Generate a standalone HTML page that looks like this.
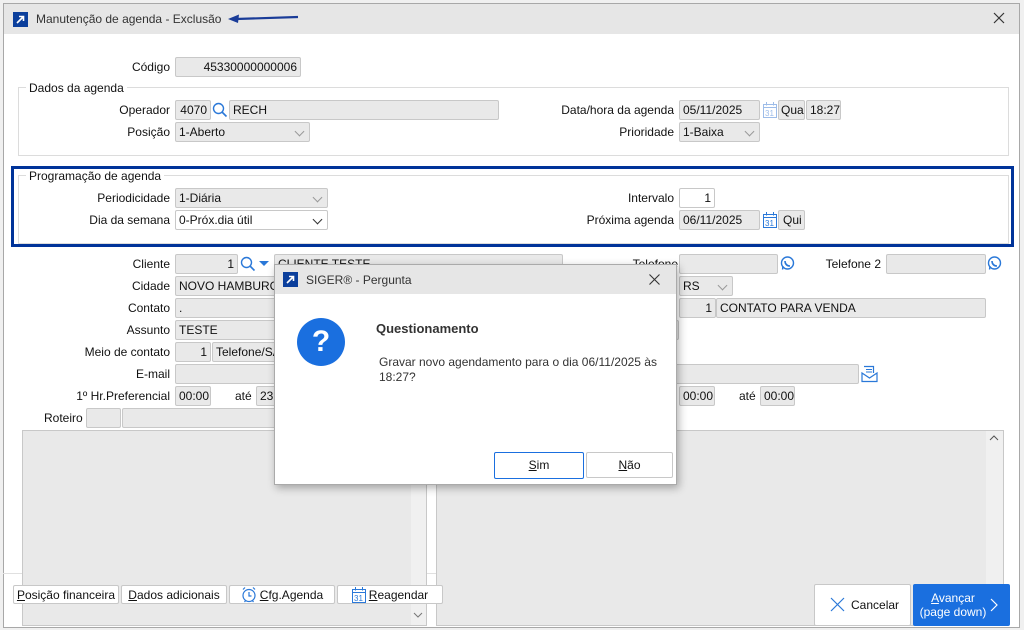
<!DOCTYPE html>
<html><head><meta charset="utf-8">
<style>
*{box-sizing:border-box;margin:0;padding:0}
body{width:1024px;height:630px;overflow:hidden;background:#f0f0f0;font-family:"Liberation Sans",sans-serif;font-size:12px;color:#111;position:relative}
.a{position:absolute}
.win{left:3px;top:3px;width:1017px;height:625px;background:#fff;border:1px solid #a8a8a8}
.tb{left:4px;top:4px;width:1015px;height:30px;background:#e6e6e6}
.lbl{position:absolute;text-align:right;white-space:nowrap;line-height:21px}
.f{position:absolute;height:20px;background:#e9e9e9;border:1px solid #c8c8c8;border-radius:2px;line-height:19px;padding:0 3px;white-space:nowrap;overflow:hidden}
.r{text-align:right}
.w{background:#fff}
.grp{position:absolute;border:1px solid #dcdcdc}
.leg{position:absolute;background:#fff;padding:0 3px;line-height:14px}
.chev{position:absolute;right:6px;top:5px;width:7px;height:7px;border-right:1px solid #999;border-bottom:1px solid #999;transform:rotate(45deg)}
.chev.d{border-color:#333}
.btn{position:absolute;height:19px;background:#fff;border:1px solid #c8c8c8;border-radius:2px;text-align:center;line-height:18px;white-space:nowrap}
u{text-decoration:underline}
</style></head><body>
<div class="a win"></div>
<div class="a tb"></div>
<svg class="a" style="left:13px;top:12px" width="15" height="15"><rect width="15" height="15" fill="#0b3f9c"/><path d="M4 11 L10.5 4.5 M6 4.5 H10.5 V9" stroke="#fff" stroke-width="1.6" fill="none"/></svg>
<div class="a" style="left:36px;top:12px;font-size:12px;color:#333">Manutenção de agenda - Exclusão</div>
<svg class="a" style="left:228px;top:12px" width="72" height="12"><path d="M70 5 L8 7" stroke="#1a3c98" stroke-width="2.2"/><path d="M0 7 L11 2.5 L10 11 Z" fill="#1a3c98"/></svg>
<svg class="a" style="left:993px;top:12px" width="12" height="12"><path d="M1 1L11 11M11 1L1 11" stroke="#333" stroke-width="1.2"/></svg>

<div class="lbl" style="right:854px;top:57px">Código</div>
<div class="f r" style="left:175px;top:57px;width:126px">45330000000006</div>

<div class="grp" style="left:18px;top:87px;width:991px;height:69px"></div>
<div class="leg" style="left:26px;top:81px">Dados da agenda</div>
<div class="lbl" style="right:854px;top:100px">Operador</div>
<div class="f r" style="left:175px;top:100px;width:36px">4070</div>
<svg class="a" style="left:212px;top:102px" width="16" height="16"><circle cx="6.5" cy="6.5" r="5" stroke="#2a78d8" stroke-width="1.4" fill="none"/><path d="M10 10L14.5 14.5" stroke="#2a78d8" stroke-width="1.6"/></svg>
<div class="f" style="left:229px;top:100px;width:270px">RECH</div>
<div class="lbl" style="right:854px;top:122px">Posição</div>
<div class="f" style="left:175px;top:122px;width:135px">1-Aberto<span class="chev"></span></div>
<div class="lbl" style="right:350px;top:100px">Data/hora da agenda</div>
<div class="f" style="left:679px;top:100px;width:81px">05/11/2025</div>
<svg class="a" style="left:763px;top:101px" width="14" height="17"><rect x="0.5" y="3.5" width="13" height="13" fill="none" stroke="#9dbce8"/><path d="M0.5 6.5H13.5M3.5 1V4.5M10.5 1V4.5" stroke="#9dbce8"/><text x="2" y="15" font-size="8" fill="#9dbce8" font-family="Liberation Sans">31</text></svg>
<div class="f" style="left:778px;top:100px;width:27px;padding:0 2px">Qua</div>
<div class="f" style="left:806px;top:100px;width:35px">18:27</div>
<div class="lbl" style="right:350px;top:122px">Prioridade</div>
<div class="f" style="left:679px;top:122px;width:81px">1-Baixa<span class="chev"></span></div>

<div class="a" style="left:11px;top:166px;width:1003px;height:81px;border:3px solid #003399"></div>
<div class="grp" style="left:18px;top:175px;width:991px;height:69px"></div>
<div class="leg" style="left:26px;top:169px">Programação de agenda</div>
<div class="lbl" style="right:854px;top:188px">Periodicidade</div>
<div class="f" style="left:175px;top:188px;width:153px">1-Diária<span class="chev"></span></div>
<div class="lbl" style="right:854px;top:210px">Dia da semana</div>
<div class="f w" style="left:175px;top:210px;width:153px">0-Próx.dia útil<span class="chev d"></span></div>
<div class="lbl" style="right:350px;top:188px">Intervalo</div>
<div class="f w r" style="left:679px;top:188px;width:36px">1</div>
<div class="lbl" style="right:350px;top:210px">Próxima agenda</div>
<div class="f" style="left:679px;top:210px;width:81px">06/11/2025</div>
<svg class="a" style="left:763px;top:211px" width="14" height="17"><rect x="0.5" y="3.5" width="13" height="13" fill="none" stroke="#2a78d8"/><path d="M0.5 6.5H13.5M3.5 1V4.5M10.5 1V4.5" stroke="#2a78d8"/><text x="2" y="15" font-size="8" fill="#2a78d8" font-family="Liberation Sans">31</text></svg>
<div class="f" style="left:778px;top:210px;width:27px;padding:0 4px">Qui</div>

<div class="lbl" style="right:854px;top:254px">Cliente</div>
<div class="f r" style="left:175px;top:254px;width:63px">1</div>
<svg class="a" style="left:240px;top:256px" width="16" height="16"><circle cx="6.5" cy="6.5" r="5" stroke="#2a78d8" stroke-width="1.4" fill="none"/><path d="M10 10L14.5 14.5" stroke="#2a78d8" stroke-width="1.6"/></svg>
<svg class="a" style="left:259px;top:261px" width="10" height="6"><path d="M0 0H10L5 5Z" fill="#2a78d8"/></svg>
<div class="f" style="left:274px;top:254px;width:289px">CLIENTE TESTE</div>
<div class="lbl" style="right:346px;top:254px">Telefone</div>
<div class="f" style="left:679px;top:254px;width:99px"></div>
<svg class="a" style="left:780px;top:256px" width="15" height="15"><circle cx="7.5" cy="7" r="6" fill="none" stroke="#2a78d8" stroke-width="1.4"/><path d="M2.5 13.5L3 10" stroke="#2a78d8" stroke-width="1.4"/><path d="M5 5c0 3 2 5 5 5" stroke="#2a78d8" stroke-width="1.6" fill="none"/></svg>
<div class="lbl" style="right:143px;top:254px">Telefone 2</div>
<div class="f" style="left:886px;top:254px;width:100px"></div>
<svg class="a" style="left:987px;top:256px" width="15" height="15"><circle cx="7.5" cy="7" r="6" fill="none" stroke="#2a78d8" stroke-width="1.4"/><path d="M2.5 13.5L3 10" stroke="#2a78d8" stroke-width="1.4"/><path d="M5 5c0 3 2 5 5 5" stroke="#2a78d8" stroke-width="1.6" fill="none"/></svg>

<div class="lbl" style="right:854px;top:276px">Cidade</div>
<div class="f" style="left:175px;top:276px;width:120px">NOVO HAMBURGO</div>
<div class="f" style="left:679px;top:276px;width:54px">RS<span class="chev"></span></div>
<div class="lbl" style="right:854px;top:298px">Contato</div>
<div class="f" style="left:175px;top:298px;width:120px">.</div>
<div class="f r" style="left:679px;top:298px;width:37px">1</div>
<div class="f" style="left:716px;top:298px;width:270px">CONTATO PARA VENDA</div>
<div class="lbl" style="right:854px;top:320px">Assunto</div>
<div class="f" style="left:175px;top:320px;width:504px">TESTE</div>
<div class="lbl" style="right:854px;top:342px">Meio de contato</div>
<div class="f r" style="left:175px;top:342px;width:36px">1</div>
<div class="f" style="left:212px;top:342px;width:80px">Telefone/SAC</div>
<div class="lbl" style="right:854px;top:364px">E-mail</div>
<div class="f" style="left:175px;top:364px;width:684px"></div>
<svg class="a" style="left:861px;top:365px" width="17" height="18"><path d="M3 1.5H12.5V8" stroke="#2a78d8" fill="none" stroke-width="1.2"/><path d="M5 4.5H11M5 7H11" stroke="#2a78d8"/><path d="M1 8V16.5H16V8L8.5 13Z" stroke="#2a78d8" stroke-width="1.2" fill="none"/></svg>
<div class="lbl" style="right:854px;top:386px">1º Hr.Preferencial</div>
<div class="f" style="left:175px;top:386px;width:36px">00:00</div>
<div class="lbl" style="left:235px;top:386px">até</div>
<div class="f" style="left:256px;top:386px;width:36px">23:59</div>
<div class="f" style="left:679px;top:386px;width:36px">00:00</div>
<div class="lbl" style="left:739px;top:386px">até</div>
<div class="f" style="left:760px;top:386px;width:35px">00:00</div>
<div class="lbl" style="left:44px;top:408px">Roteiro</div>
<div class="f" style="left:86px;top:408px;width:35px"></div>
<div class="f" style="left:122px;top:408px;width:200px"></div>

<div class="a" style="left:3px;top:573px;width:433px;height:1px;background:#e0e0e0"></div>
<div class="a" style="left:22px;top:430px;width:405px;height:196px;background:#e9e9e9;border:1px solid #c8c8c8"></div>
<div class="a" style="left:411px;top:431px;width:15px;height:194px;background:#f0f0f0"></div>
<svg class="a" style="left:413px;top:612px" width="10" height="6"><path d="M1 1L5 5L9 1" stroke="#777" fill="none"/></svg>
<div class="a" style="left:436px;top:430px;width:568px;height:196px;background:#e9e9e9;border:1px solid #c8c8c8"></div>
<div class="a" style="left:986px;top:431px;width:17px;height:194px;background:#f0f0f0"></div>
<svg class="a" style="left:989px;top:435px" width="10" height="6"><path d="M1 5L5 1L9 5" stroke="#555" fill="none"/></svg>

<div class="btn" style="left:13px;top:585px;width:106px"><u>P</u>osição financeira</div>
<div class="btn" style="left:121px;top:585px;width:106px"><u>D</u>ados adicionais</div>
<div class="btn" style="left:229px;top:585px;width:106px"><svg style="vertical-align:-4px;margin-right:3px" width="16" height="17"><circle cx="8" cy="9.5" r="6" fill="none" stroke="#2a78d8" stroke-width="1.2"/><path d="M8 6V10H10.5M2 3.5L4 1.5M14 3.5L12 1.5M3.5 16L5 14M12.5 16L11 14" stroke="#2a78d8" stroke-width="1.2" fill="none"/></svg><u>C</u>fg.Agenda</div>
<div class="btn" style="left:337px;top:585px;width:106px"><svg style="vertical-align:-4px;margin-right:3px" width="14" height="17"><rect x="0.5" y="3.5" width="13" height="13" fill="none" stroke="#2a78d8"/><path d="M0.5 6.5H13.5M3.5 1V4.5M10.5 1V4.5" stroke="#2a78d8"/><text x="2" y="15" font-size="8" fill="#2a78d8" font-family="Liberation Sans">31</text></svg><u>R</u>eagendar</div>

<div class="a" style="left:814px;top:584px;width:97px;height:42px;background:#fff;border:1px solid #c8c8c8;border-radius:2px"></div>
<svg class="a" style="left:830px;top:597px" width="15" height="15"><path d="M1 1L14 14M14 1L1 14" stroke="#2a78d8" stroke-width="1.2"/></svg>
<div class="a" style="left:851px;top:598px;font-size:12px">Cancelar</div>
<div class="a" style="left:913px;top:584px;width:97px;height:42px;background:#1a6fdf;border-radius:2px;color:#fff;font-size:12px;line-height:14px">
<div class="a" style="left:3px;top:7px;text-align:center;width:74px;white-space:nowrap"><u>A</u>vançar<br>(page down)</div>
<svg class="a" style="left:77px;top:14px" width="8" height="14"><path d="M1 1L7 7L1 13" stroke="#fff" stroke-width="1.2" fill="none"/></svg></div>

<div class="a" style="left:274px;top:264px;width:403px;height:221px;background:#fff;border:1px solid #aaa;box-shadow:2px 3px 8px rgba(0,0,0,.3)"></div>
<div class="a" style="left:275px;top:265px;width:401px;height:29px;background:#e6e6e6"></div>
<svg class="a" style="left:283px;top:272px" width="15" height="15"><rect width="15" height="15" fill="#0b3f9c"/><path d="M4 11 L10.5 4.5 M6 4.5 H10.5 V9" stroke="#fff" stroke-width="1.6" fill="none"/></svg>
<div class="a" style="left:306px;top:273px;font-size:12px;color:#333">SIGER® - Pergunta</div>
<svg class="a" style="left:649px;top:274px" width="11" height="11"><path d="M0.5 0.5L10.5 10.5M10.5 0.5L0.5 10.5" stroke="#333" stroke-width="1.1"/></svg>
<div class="a" style="left:297px;top:318px;width:48px;height:48px;border-radius:50%;background:#1a6fdf;color:#fff;font-weight:bold;font-size:30px;text-align:center;line-height:48px">?</div>
<div class="a" style="left:376px;top:321px;font-weight:bold;font-size:13px;color:#333">Questionamento</div>
<div class="a" style="left:379px;top:355px;width:285px;line-height:15px;color:#333">Gravar novo agendamento para o dia 06/11/2025 às 18:27?</div>
<div class="btn" style="left:494px;top:452px;width:90px;height:27px;line-height:25px;border:1px solid #1a6fdf"><u>S</u>im</div>
<div class="btn" style="left:586px;top:452px;width:87px;height:26px;line-height:24px"><u>N</u>ão</div>
</body></html>
